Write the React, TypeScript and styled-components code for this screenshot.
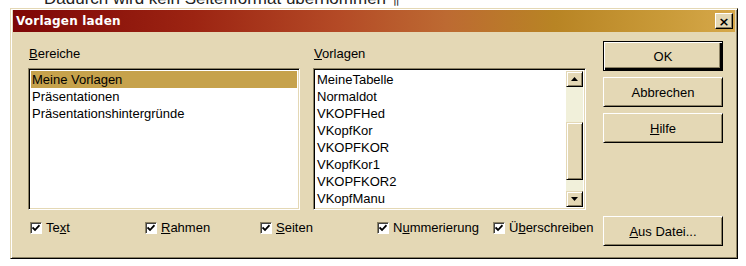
import React from "react";
import styled, { createGlobalStyle } from "styled-components";

const GlobalStyle = createGlobalStyle`
  html, body {
    margin: 0;
    padding: 0;
    background: #ffffff;
  }
  body {
    font-family: "Liberation Sans", Arial, sans-serif;
    font-size: 13px;
    color: #000;
  }
`;

const beige = "#e4d8b5";
const shade = "#8c8264";

const Screen = styled.div`
  width: 746px;
  height: 266px;
  overflow: hidden;
  background: #fff;
`;

const DocStrip = styled.div`
  height: 8px;
  overflow: hidden;
  padding-left: 44px;
`;

const DocText = styled.div`
  font-size: 17px;
  line-height: 20px;
  margin-top: -11px;
  color: #222;
  white-space: nowrap;
`;

const Dialog = styled.div`
  margin-left: 10px;
  width: 728px;
  height: 251px;
  box-sizing: border-box;
  background: ${beige};
  border: 1px solid;
  border-color: ${beige} #000 #000 ${beige};
  box-shadow: inset 1px 1px #fff, inset -1px -1px ${shade};
  padding: 1px 2px 2px 2px;
  display: flex;
  flex-direction: column;
`;

const TitleBar = styled.div`
  height: 22px;
  flex: none;
  display: flex;
  align-items: center;
  justify-content: space-between;
  padding: 0 2px 0 3px;
  background: linear-gradient(
    to right,
    #7e0606 0%,
    #9c2412 25%,
    #b44a26 45%,
    #bd6a32 60%,
    #b88424 75%,
    #c99a38 90%,
    #d6a84a 100%
  );
`;

const TitleText = styled.span`
  font-family: "DejaVu Sans", Verdana, sans-serif;
  font-weight: bold;
  font-size: 12px;
  color: #fff;
  letter-spacing: 0.2px;
`;

const CloseButton = styled.div`
  width: 18px;
  height: 16px;
  box-sizing: border-box;
  background: ${beige};
  border: 1px solid;
  border-color: #fff #000 #000 #fff;
  box-shadow: inset -1px -1px ${shade};
  display: flex;
  align-items: center;
  justify-content: center;
  font-family: "DejaVu Sans", sans-serif;
  font-weight: bold;
  font-size: 13px;
  line-height: 1;
`;

const Body = styled.div`
  flex: 1;
  display: flex;
  padding: 0 0 0 15px;
`;

const MainArea = styled.div`
  width: 558px;
  padding-top: 14px;
  display: flex;
  flex-direction: column;
`;

const Columns = styled.div`
  display: grid;
  grid-template-columns: 272px 273px;
  column-gap: 13px;
`;

const FieldLabel = styled.div`
  height: 15px;
  line-height: 15px;
  margin-bottom: 7px;
  padding-left: 1px;
`;

const ListBox = styled.div`
  height: 142px;
  box-sizing: border-box;
  background: #fff;
  border: 1px solid;
  border-color: ${shade} #fff #fff ${shade};
  box-shadow: inset 1px 1px #000, inset -1px -1px ${beige};
  padding: 2px;
  display: flex;
  overflow: hidden;
`;

const Rows = styled.div`
  flex: 1;
  overflow: hidden;
`;

const Row = styled.div<{ $selected?: boolean }>`
  height: 17px;
  line-height: 17px;
  padding-left: 1px;
  white-space: nowrap;
  background: ${(p) => (p.$selected ? "#c6a24c" : "transparent")};
`;

const ScrollBar = styled.div`
  width: 17px;
  display: flex;
  flex-direction: column;
  background: #f1f0da;
`;

const ScrollArrow = styled.div`
  height: 16px;
  flex: none;
  box-sizing: border-box;
  background: ${beige};
  border: 1px solid;
  border-color: ${beige} #000 #000 ${beige};
  box-shadow: inset 1px 1px #fff, inset -1px -1px ${shade};
  display: flex;
  align-items: center;
  justify-content: center;
`;

const Track = styled.div`
  flex: 1;
  display: flex;
  flex-direction: column;
`;

const Thumb = styled.div<{ $offset: number; $size: number }>`
  margin-top: ${(p) => p.$offset}px;
  height: ${(p) => p.$size}px;
  box-sizing: border-box;
  background: ${beige};
  border: 1px solid;
  border-color: ${beige} #000 #000 ${beige};
  box-shadow: inset 1px 1px #fff, inset -1px -1px ${shade};
`;

const CheckRow = styled.div`
  margin-top: 10px;
  margin-left: 2px;
  display: grid;
  grid-template-columns: 115px 115px 117px 116px auto;
  white-space: nowrap;
`;

const CheckItem = styled.label`
  display: flex;
  align-items: center;
  gap: 4px;
  height: 15px;
`;

const CheckBox = styled.span`
  width: 12px;
  height: 12px;
  box-sizing: border-box;
  background: #fff;
  border: 1px solid;
  border-color: ${shade} #fff #fff ${shade};
  box-shadow: inset 1px 1px #404040;
  display: flex;
  align-items: center;
  justify-content: center;
`;

const ButtonColumn = styled.div`
  margin-left: 17px;
  width: 120px;
  padding: 9px 0 10px;
  display: flex;
  flex-direction: column;
  gap: 6px;
`;

const PushButton = styled.div<{ $default?: boolean; $push?: boolean }>`
  height: ${(p) => (p.$default ? 30 : 30)}px;
  box-sizing: border-box;
  display: flex;
  align-items: center;
  justify-content: center;
  background: ${beige};
  border: 1px solid;
  border-color: ${(p) => (p.$default ? "#000" : "#fff #000 #000 #fff")};
  box-shadow: ${(p) =>
    p.$default
      ? `inset 1px 1px #fff, inset -2px -2px #000, inset -3px -3px ${shade}`
      : `inset 1px 1px ${beige}, inset -1px -1px ${shade}`};
  margin-top: ${(p) => (p.$push ? "auto" : "0")};
`;

const U = styled.span`
  text-decoration: underline;
`;

const Tick = () => (
  <svg width="8" height="8" viewBox="0 0 8 8">
    <path d="M0.5 3.5 L3 6 L7.5 1.2" fill="none" stroke="#000" strokeWidth="1.8" />
  </svg>
);

const ArrowUp = () => (
  <svg width="7" height="4" viewBox="0 0 7 4">
    <path d="M3.5 0 L7 4 L0 4 Z" fill="#000" />
  </svg>
);

const ArrowDown = () => (
  <svg width="7" height="4" viewBox="0 0 7 4">
    <path d="M0 0 L7 0 L3.5 4 Z" fill="#000" />
  </svg>
);

const bereiche = ["Meine Vorlagen", "Präsentationen", "Präsentationshintergründe"];

const vorlagen = [
  "MeineTabelle",
  "Normaldot",
  "VKOPFHed",
  "VKopfKor",
  "VKOPFKOR",
  "VKopfKor1",
  "VKOPFKOR2",
  "VKopfManu",
  "VKOPFPAGE",
];

export default function App() {
  return (
    <Screen>
      <GlobalStyle />
      <DocStrip>
        <DocText>Dadurch wird kein Seitenformat übernommen ¶</DocText>
      </DocStrip>
      <Dialog>
        <TitleBar>
          <TitleText>Vorlagen laden</TitleText>
          <CloseButton>×</CloseButton>
        </TitleBar>
        <Body>
          <MainArea>
            <Columns>
              <FieldLabel>
                <U>B</U>ereiche
              </FieldLabel>
              <FieldLabel>
                <U>V</U>orlagen
              </FieldLabel>
              <ListBox>
                <Rows>
                  {bereiche.map((name, i) => (
                    <Row key={name} $selected={i === 0}>
                      {name}
                    </Row>
                  ))}
                </Rows>
              </ListBox>
              <ListBox>
                <Rows>
                  {vorlagen.map((name) => (
                    <Row key={name}>{name}</Row>
                  ))}
                </Rows>
                <ScrollBar>
                  <ScrollArrow>
                    <ArrowUp />
                  </ScrollArrow>
                  <Track>
                    <Thumb $offset={35} $size={58} />
                  </Track>
                  <ScrollArrow>
                    <ArrowDown />
                  </ScrollArrow>
                </ScrollBar>
              </ListBox>
            </Columns>
            <CheckRow>
              <CheckItem>
                <CheckBox>
                  <Tick />
                </CheckBox>
                <span>
                  Te<U>x</U>t
                </span>
              </CheckItem>
              <CheckItem>
                <CheckBox>
                  <Tick />
                </CheckBox>
                <span>
                  <U>R</U>ahmen
                </span>
              </CheckItem>
              <CheckItem>
                <CheckBox>
                  <Tick />
                </CheckBox>
                <span>
                  <U>S</U>eiten
                </span>
              </CheckItem>
              <CheckItem>
                <CheckBox>
                  <Tick />
                </CheckBox>
                <span>
                  N<U>u</U>mmerierung
                </span>
              </CheckItem>
              <CheckItem>
                <CheckBox>
                  <Tick />
                </CheckBox>
                <span>
                  Ü<U>b</U>erschreiben
                </span>
              </CheckItem>
            </CheckRow>
          </MainArea>
          <ButtonColumn>
            <PushButton $default>OK</PushButton>
            <PushButton>Abbrechen</PushButton>
            <PushButton>
              <span>
                <U>H</U>ilfe
              </span>
            </PushButton>
            <PushButton $push>
              <span>
                <U>A</U>us Datei...
              </span>
            </PushButton>
          </ButtonColumn>
        </Body>
      </Dialog>
    </Screen>
  );
}
